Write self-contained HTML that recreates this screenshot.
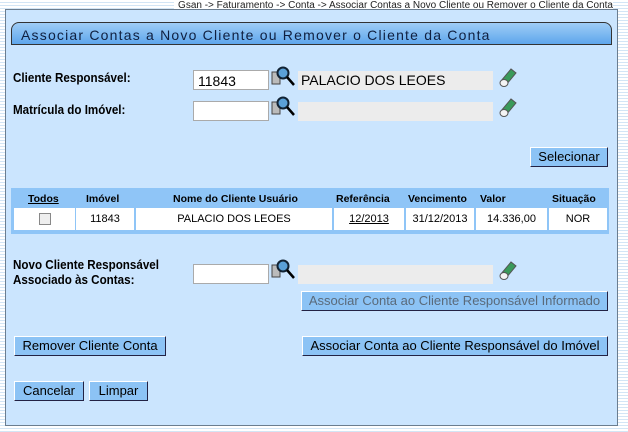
<!DOCTYPE html>
<html><head><style>
body{margin:0;width:628px;height:432px;overflow:hidden;font-family:"Liberation Sans",Arial,sans-serif;
background:repeating-linear-gradient(#fff 0,#fff 2px,#d3e5f5 2px,#d3e5f5 3px);position:relative}
.a{position:absolute}
#panel{left:5px;top:9px;width:611px;height:415px;background:#cbe5fe;border:1px solid #6b7d8f}
.crumb{right:15px;top:0;font-size:10px;color:#222;background:#fff;padding-left:4px}
#title{left:11px;top:22px;height:23px;border:1px solid #333;border-radius:8px 8px 0 0;
background:linear-gradient(#9fcdf6,#5ea6ec);font-size:14px;letter-spacing:1.2px;color:#102040;line-height:24px;padding-left:9px;box-sizing:border-box;width:601px}
.lbl{font-size:12.5px;font-weight:bold;color:#000;transform:scaleX(.93);transform-origin:left}
.in{background:#fff;border:1px solid #aaa;height:20px;box-sizing:border-box;font-size:14px;padding:2px 4px}
.ro{background:#ececec;height:19px;font-size:14px;padding:1px 3px;box-sizing:border-box}
.btn{background:#8cc3f5;border:1px solid #224;border-top-color:#fff;border-left-color:#fff;font-size:13px;height:20px;box-sizing:border-box;text-align:center;line-height:18px;color:#000}
.tb{left:11px;top:188px;width:598px;height:46px;background:#8fc5f7}
.th{font-size:10.5px;font-weight:bold;top:193px}
.td{top:208px;height:22px;background:#fff;font-size:11px;text-align:center;line-height:22px}
</style></head><body>
<div class="a crumb">Gsan -&gt; Faturamento -&gt; Conta -&gt; Associar Contas a Novo Cliente ou Remover o Cliente da Conta</div>
<div id="panel" class="a"></div>
<div id="title" class="a">Associar Contas a Novo Cliente ou Remover o Cliente da Conta</div>

<div class="a lbl" style="left:13px;top:71px">Cliente Responsável:</div>
<div class="a in" style="left:193px;top:70px;width:76px">11843</div>
<svg class="a" style="left:271px;top:66px" width="26" height="22"><rect x="1" y="6" width="8" height="12" fill="#bbb" stroke="#444"/><circle cx="12" cy="7" r="5.5" fill="#5aa0d8" stroke="#123" stroke-width="2"/><line x1="16" y1="11" x2="23" y2="19" stroke="#000" stroke-width="2.5"/></svg>
<div class="a ro" style="left:298px;top:71px;width:195px">PALACIO DOS LEOES</div>
<svg class="a" style="left:499px;top:66px" width="18" height="22"><path d="M2 15 L12 3 L17 7 L7 19 Z" fill="#3a9a5a" stroke="#555"/><ellipse cx="5" cy="17" rx="4" ry="3.5" fill="#f4f4f4" stroke="#555"/></svg>

<div class="a lbl" style="left:13px;top:103px">Matrícula do Imóvel:</div>
<div class="a in" style="left:193px;top:101px;width:76px"></div>
<svg class="a" style="left:271px;top:96px" width="26" height="22"><rect x="1" y="6" width="8" height="12" fill="#bbb" stroke="#444"/><circle cx="12" cy="7" r="5.5" fill="#5aa0d8" stroke="#123" stroke-width="2"/><line x1="16" y1="11" x2="23" y2="19" stroke="#000" stroke-width="2.5"/></svg>
<div class="a ro" style="left:298px;top:102px;width:195px"></div>
<svg class="a" style="left:499px;top:96px" width="18" height="22"><path d="M2 15 L12 3 L17 7 L7 19 Z" fill="#3a9a5a" stroke="#555"/><ellipse cx="5" cy="17" rx="4" ry="3.5" fill="#f4f4f4" stroke="#555"/></svg>

<div class="a btn" style="left:530px;top:147px;width:78px">Selecionar</div>

<div class="a tb"></div>
<div class="a th" style="left:28px;text-decoration:underline">Todos</div>
<div class="a th" style="left:86px">Imóvel</div>
<div class="a th" style="left:173px">Nome do Cliente Usuário</div>
<div class="a th" style="left:336px">Referência</div>
<div class="a th" style="left:408px">Vencimento</div>
<div class="a th" style="left:480px">Valor</div>
<div class="a th" style="left:552px">Situação</div>
<div class="a td" style="left:14px;width:61px"><span style="display:inline-block;width:10px;height:10px;border:1px solid #888;background:#eee;vertical-align:middle"></span></div>
<div class="a td" style="left:76px;width:58px">11843</div>
<div class="a td" style="left:136px;width:196px">PALACIO DOS LEOES</div>
<div class="a td" style="left:334px;width:70px;text-decoration:underline">12/2013</div>
<div class="a td" style="left:406px;width:68px">31/12/2013</div>
<div class="a td" style="left:476px;width:71px">14.336,00</div>
<div class="a td" style="left:549px;width:58px">NOR</div>

<div class="a lbl" style="left:13px;top:258px;line-height:15px">Novo Cliente Responsável<br>Associado às Contas:</div>
<div class="a in" style="left:193px;top:264px;width:76px"></div>
<svg class="a" style="left:271px;top:259px" width="26" height="22"><rect x="1" y="6" width="8" height="12" fill="#bbb" stroke="#444"/><circle cx="12" cy="7" r="5.5" fill="#5aa0d8" stroke="#123" stroke-width="2"/><line x1="16" y1="11" x2="23" y2="19" stroke="#000" stroke-width="2.5"/></svg>
<div class="a ro" style="left:298px;top:265px;width:195px"></div>
<svg class="a" style="left:499px;top:259px" width="18" height="22"><path d="M2 15 L12 3 L17 7 L7 19 Z" fill="#3a9a5a" stroke="#555"/><ellipse cx="5" cy="17" rx="4" ry="3.5" fill="#f4f4f4" stroke="#555"/></svg>
<div class="a btn" style="left:301px;top:291px;width:307px;color:#5a6a7a">Associar Conta ao Cliente Responsável Informado</div>

<div class="a btn" style="left:14px;top:336px;width:152px">Remover Cliente Conta</div>
<div class="a btn" style="left:302px;top:336px;width:306px">Associar Conta ao Cliente Responsável do Imóvel</div>
<div class="a btn" style="left:14px;top:381px;width:70px">Cancelar</div>
<div class="a btn" style="left:89px;top:381px;width:59px">Limpar</div>
</body></html>
